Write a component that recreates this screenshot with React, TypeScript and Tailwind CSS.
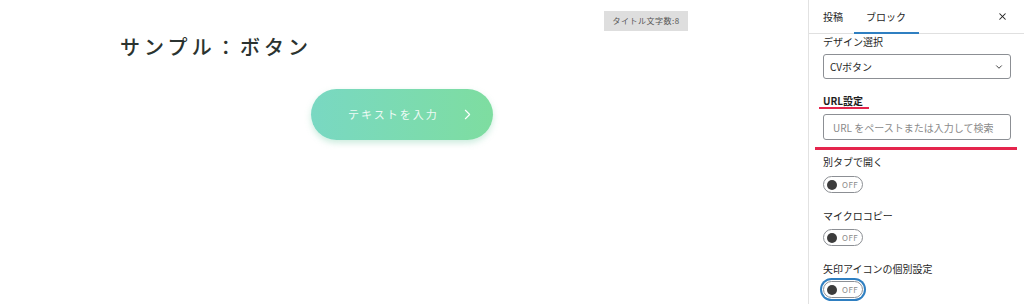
import React from "react";
import { X, ChevronDown, ChevronRight } from "lucide-react";

const font = { fontFamily: '"Noto Sans CJK JP", "Noto Sans", "Liberation Sans", sans-serif' };

function Toggle({ focused = false }: { focused?: boolean }) {
  return (
    <div
      className={
        "flex items-center w-[40px] h-[17px] rounded-full border border-[#8c8f94] bg-white pl-[3px] gap-[5px] " +
        (focused ? "ring-2 ring-[#2f7fc1] ring-offset-1" : "")
      }
    >
      <div className="w-[10px] h-[10px] rounded-full bg-[#3c3c3c]" />
      <span className="text-[8px] leading-none text-[#8a8a8a] tracking-[0.5px]">OFF</span>
    </div>
  );
}

export default function App() {
  return (
    <div className="flex w-[1024px] h-[304px] bg-white overflow-hidden" style={font}>
      {/* main canvas */}
      <div className="flex-1 flex flex-col px-[120px] pt-[11px]">
        <div className="flex justify-end h-[20px]">
          <div className="flex items-center justify-center w-[84px] h-[20px] bg-[#dedede] text-[8px] text-[#555] tracking-[0.5px]">
            タイトル文字数:8
          </div>
        </div>
        <h1 className="mt-[2px] text-[20px] leading-[28px] font-medium tracking-[4.1px] text-[#2b3330]">
          サンプル：ボタン
        </h1>
        <div className="flex justify-center mt-[28px] pr-[4px]">
          <div className="flex items-center justify-between w-[182px] h-[51px] rounded-full bg-gradient-to-r from-[#79d8c2] to-[#7edda0] pl-[37px] pr-[17px] shadow-[0_3px_6px_rgba(110,200,160,0.35)]">
            <span className="text-[11px] tracking-[2px] text-[#eefaf5]">テキストを入力</span>
            <ChevronRight size={17} strokeWidth={1.6} className="text-white" />
          </div>
        </div>
      </div>

      {/* sidebar */}
      <div className="w-[216px] h-full border-l border-[#e2e2e2] flex flex-col">
        <div className="flex items-stretch h-[34px] border-b border-[#e0e0e0]">
          <div className="w-[45px] pl-[14px] flex items-center text-[10px] text-[#1e1e1e]">投稿</div>
          <div className="relative w-[65px] flex items-center justify-center text-[10px] text-[#1e1e1e] pr-[1px]">
            ブロック
            <div className="absolute left-0 right-0 bottom-[-1px] h-[2px] bg-[#2f7fc1]" />
          </div>
          <div className="flex-1 flex items-center justify-end pr-[16px]">
            <X size={11} strokeWidth={2.2} className="text-[#1e1e1e]" />
          </div>
        </div>

        <div className="flex flex-col pl-[14px] pr-[13px] text-[10px] text-[#1e1e1e]">
          <div className="h-[16px] leading-[16px]">デザイン選択</div>
          <div className="mt-[4px] h-[25px] rounded-[3px] border border-[#8c8f94] flex items-center justify-between pl-[6px] pr-[6px]">
            <span className="text-[10px] text-[#1e1e1e]">CVボタン</span>
            <ChevronDown size={10} strokeWidth={2} className="text-[#1e1e1e]" />
          </div>

          <div className="mt-[15px] h-[13px] leading-[13px] font-bold">URL設定</div>
          <div className="-ml-[4px] w-[50px] h-[2px] bg-[#e5254d]" />
          <div className="mt-[5px] h-[26px] rounded-[3px] border border-[#8c8f94] flex items-center pl-[9px]">
            <span className="text-[10px] text-[#8a8a8a]">URL をペーストまたは入力して検索</span>
          </div>
          <div className="mt-[7px] -ml-[8px] w-[202px] h-[3px] bg-[#e5254d]" />

          <div className="mt-[4px] h-[16px] leading-[16px]">別タブで開く</div>
          <div className="mt-[6px]">
            <Toggle />
          </div>

          <div className="mt-[15px] h-[16px] leading-[16px]">マイクロコピー</div>
          <div className="mt-[5px]">
            <Toggle />
          </div>

          <div className="mt-[15px] h-[16px] leading-[16px]">矢印アイコンの個別設定</div>
          <div className="mt-[4px]">
            <Toggle focused />
          </div>
        </div>
      </div>
    </div>
  );
}
